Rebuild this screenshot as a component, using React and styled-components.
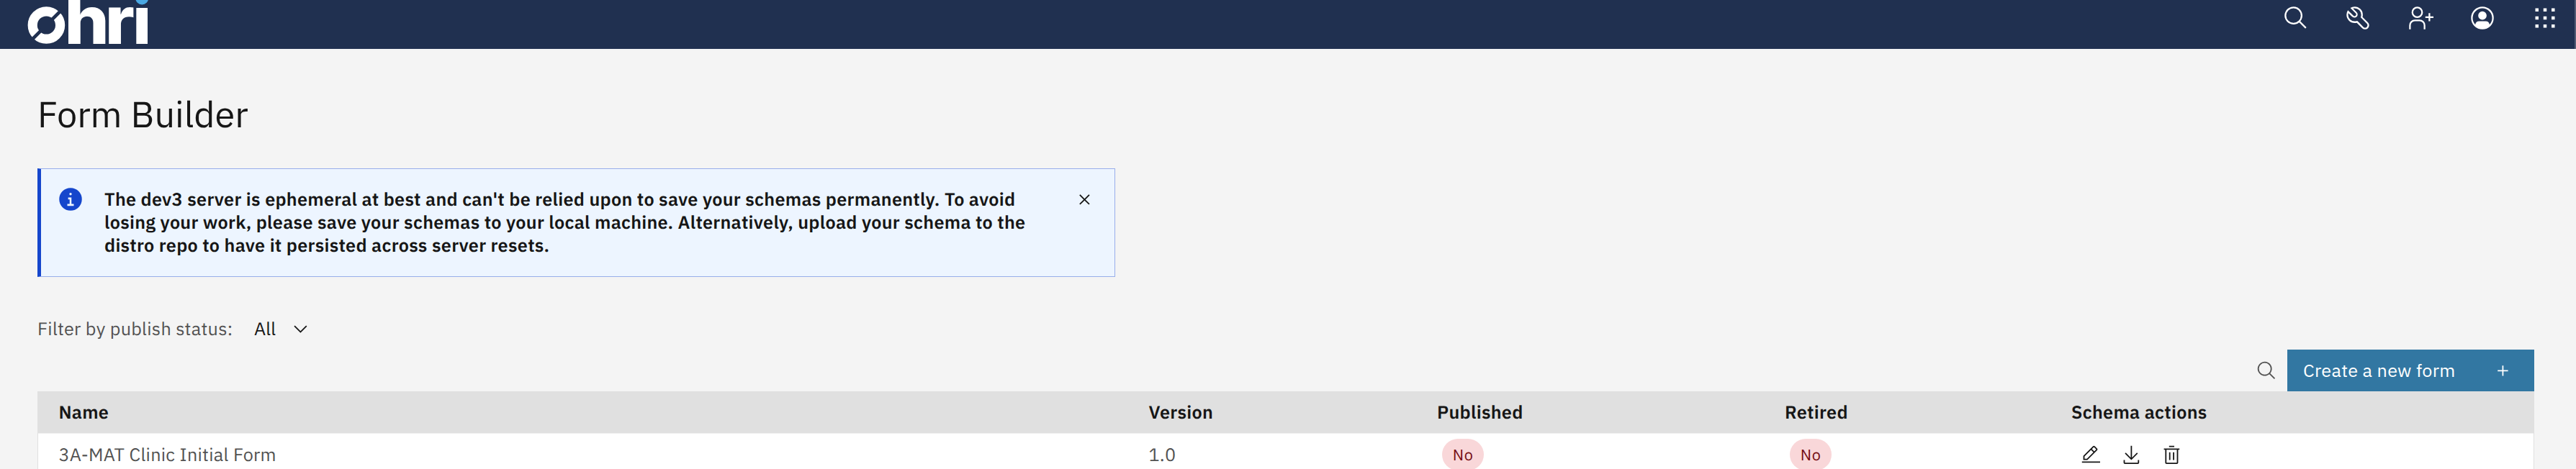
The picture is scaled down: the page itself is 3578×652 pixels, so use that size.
import React from "react";
import styled, { createGlobalStyle } from "styled-components";

const GlobalStyle = createGlobalStyle`
  *, *::before, *::after { box-sizing: border-box; }
  body {
    margin: 0;
    background: #f4f4f4;
    color: #161616;
    font-family: "IBM Plex Sans", Roboto, "Liberation Sans", sans-serif;
    font-size: 25.2px;
    line-height: 32.4px;
    letter-spacing: 0.288px;
    text-rendering: geometricPrecision;
  }
  svg { display: block; flex: none; }
`;

const Page = styled.div`
  height: 652px;
  overflow: hidden;
  display: flex;
  flex-direction: column;
`;

const Header = styled.header`
  height: 68px;
  flex: none;
  display: flex;
  justify-content: space-between;
  background: #203050;
  border-right: 2px solid #525c74;
`;

const HeaderActions = styled.nav`
  display: flex;
  height: 50px;
  margin-right: -2px;
`;

const HeaderButton = styled.button`
  width: 86.5px;
  padding: 0;
  border: 0;
  background: none;
  color: #fff;
  display: flex;
  align-items: center;
  justify-content: center;
`;

const Main = styled.main`
  padding: 0 58px 0 52px;
  display: flex;
  flex-direction: column;
`;

const Title = styled.h1`
  margin: 58px 0 0;
  font-size: 50.4px;
  line-height: 64px;
  font-weight: 400;
  letter-spacing: 0;
`;

const Notification = styled.section`
  width: 1497px;
  height: 151px;
  margin-top: 44px;
  padding: 25.5px 27px 0 23px;
  display: flex;
  align-items: flex-start;
  background: #edf5ff;
  border: 1px solid #98aeea;
  border-left: 5px solid #1546cc;
`;

const NotificationText = styled.p`
  width: 1300px;
  margin: 0 auto 0 29px;
  font-weight: 600;
`;

const NotificationIcon = styled.span`
  margin-top: -1.5px;
  color: #1546cc;
`;

const CloseButton = styled.button`
  margin-top: 2.5px;
  padding: 0;
  border: 0;
  background: none;
  color: #161616;
`;

const FilterRow = styled.div`
  height: 58px;
  margin-top: 43.5px;
  display: flex;
  align-items: center;
`;

const FilterLabel = styled.span`
  color: #525252;
  margin-right: 29.5px;
`;

const FilterValue = styled.span`
  margin-right: 19.5px;
`;

const Toolbar = styled.div`
  height: 58px;
  margin-top: -0.5px;
  display: flex;
  justify-content: flex-end;
`;

const SearchButton = styled.button`
  width: 57px;
  padding: 0;
  border: 0;
  background: none;
  color: #525252;
  display: flex;
  align-items: center;
  justify-content: center;
`;

const CreateButton = styled.button`
  width: 343px;
  padding: 0 29px 0 22px;
  border: 0;
  background: #3277a2;
  color: #fff;
  font: inherit;
  letter-spacing: 0.288px;
  display: flex;
  align-items: center;
  justify-content: space-between;
`;

const Table = styled.div`
  display: flex;
  flex-direction: column;
`;

const Row = styled.div`
  height: ${(p) => (p.$head ? "58px" : "60px")};
  display: grid;
  grid-template-columns: 1514px 400.7px 483px 398px 1fr;
  background: ${(p) => (p.$head ? "#e0e0e0" : "#fff")};
  color: ${(p) => (p.$head ? "#161616" : "#525252")};
  font-weight: ${(p) => (p.$head ? 600 : 400)};
  box-shadow: ${(p) =>
    p.$head ? "none" : "inset 1px 0 #e0e0e0, inset -1px 0 #e0e0e0, inset 0 1px #f1f1f1"};
`;

const Cell = styled.div`
  padding-left: 29.4px;
  display: flex;
  align-items: center;
`;

const Tag = styled.span`
  height: 43.2px;
  min-width: 57.6px;
  margin-left: 7.2px;
  padding: 0 14.4px;
  border-radius: 27px;
  background: #f9d7d9;
  color: #750e13;
  font-size: 21.6px;
  letter-spacing: 0.576px;
  display: flex;
  align-items: center;
  justify-content: center;
`;

const Actions = styled.div`
  margin-left: 13.2px;
  display: flex;
  gap: 27.2px;
  color: #161616;
`;

const ICONS = {
  search:
    "M29,27.5859l-7.5521-7.5521a11.0177,11.0177,0,1,0-1.4141,1.4141L27.5859,29ZM4,13a9,9,0,1,1,9,9A9.01,9.01,0,0,1,4,13Z",
  tools:
    "M12.1,2a9.8,9.8,0,0,0-5.4,1.6l6.4,6.4a2.1,2.1,0,0,1,.2,3,2.1,2.1,0,0,1-3-.2L3.7,6.4A9.84,9.84,0,0,0,2,12.1,10.14,10.14,0,0,0,12.1,22.2a10.9,10.9,0,0,0,2.6-.3l6.7,6.7a5,5,0,0,0,7.1-7.1l-6.7-6.7a10.9,10.9,0,0,0,.3-2.6A10,10,0,0,0,12.1,2Zm8,10.1a7.61,7.61,0,0,1-.3,2.1l-.3,1.1.8.8,6.7,6.7a2.88,2.88,0,0,1,.9,2.1A2.72,2.72,0,0,1,27,27a2.9,2.9,0,0,1-4.2,0l-6.7-6.7-.8-.8-1.1.3a7.61,7.61,0,0,1-2.1.3,8.27,8.27,0,0,1-5.7-2.3A7.63,7.63,0,0,1,4,12.1a8.33,8.33,0,0,1,.3-2.2l4.4,4.4a4.14,4.14,0,0,0,5.9.2,4.14,4.14,0,0,0-.2-5.9L10,4.2a6.45,6.45,0,0,1,2-.3,8.27,8.27,0,0,1,5.7,2.3A8.49,8.49,0,0,1,20.1,12.1Z",
  userAdd:
    "M32 14H28V10H26V14H22V16H26V20H28V16H32ZM12 4A5 5 0 1 1 7 9a5 5 0 0 1 5-5m0-2a7 7 0 1 0 7 7A7 7 0 0 0 12 2ZM22 30H20V25a5 5 0 0 0-5-5H9a5 5 0 0 0-5 5v5H2V25a7 7 0 0 1 7-7h6a7 7 0 0 1 7 7Z",
  avatar:
    "M16 2a14 14 0 1 0 14 14A14 14 0 0 0 16 2Zm8.8 22.2A4.8 4.8 0 0 0 20 20h-8a4.8 4.8 0 0 0-4.8 4.2 12 12 0 1 1 17.6 0ZM16 7.8a5.2 5.2 0 1 0 5.2 5.2A5.2 5.2 0 0 0 16 7.8Z",
  switcher:
    "M4 4h4v4H4zM14 4h4v4h-4zM24 4h4v4h-4zM4 14h4v4H4zM14 14h4v4h-4zM24 14h4v4h-4zM4 24h4v4H4zM14 24h4v4h-4zM24 24h4v4h-4z",
  info:
    "M16,2A14,14,0,1,0,30,16,14,14,0,0,0,16,2Zm0,6a1.5,1.5,0,1,1-1.5,1.5A1.5,1.5,0,0,1,16,8Zm4,16.125H12v-2.25h2.875v-5.75H13v-2.25h4.125v8H20Z",
  close:
    "M17.4141 16 24 9.4141 22.5859 8 16 14.5859 9.4143 8 8 9.4141 14.5859 16 8 22.5859 9.4143 24 16 17.4141 22.5859 24 24 22.5859Z",
  chevron: "M16 22 6 12 7.4 10.6 16 19.2 24.6 10.6 26 12Z",
  add: "M17 15V8H15V15H8V17H15V24H17V17H24V15Z",
  edit:
    "M2 26h28v2H2ZM25.4 9c.8-.8.8-2 0-2.8l-3.6-3.6c-.8-.8-2-.8-2.8 0l-15 15V24h6.4l15-15Zm-5-5L24 7.6l-3 3L17.4 7l3-3ZM6 22v-3.6l10-10 3.6 3.6-10 10H6Z",
  download:
    "M26 24v4H6v-4H4v4a2 2 0 0 0 2 2h20a2 2 0 0 0 2-2v-4ZM26 14 24.59 12.59 17 20.17V2h-2v18.17L7.41 12.59 6 14 16 24Z",
  trash:
    "M12 12h2v12h-2ZM18 12h2v12h-2ZM4 6v2h2v20a2 2 0 0 0 2 2h16a2 2 0 0 0 2-2V8h2V6ZM8 28V8h16v20ZM12 2h8v2h-8Z",
};

const Icon = ({ name, size = 28.8 }) => (
  <svg width={size} height={size} viewBox="0 0 32 32" fill="currentColor" fillRule="evenodd" aria-hidden="true">
    <path d={ICONS[name]} />
  </svg>
);

const LogoText = styled.text`
  font-family: Inter, sans-serif;
  font-weight: 770;
  font-size: 92.5px;
  letter-spacing: 0;
  fill: #fff;
`;

const Logo = () => (
  <svg width="230" height="68" viewBox="0 0 230 68" role="img" aria-label="ohri">
    <circle cx="64.4" cy="35" r="19.2" fill="none" stroke="#fff" strokeWidth="13.2" />
    <path d="M70.5 28.9 86 13.4M58.3 41.1 42.8 56.6" stroke="#203050" strokeWidth="4.8" />
    <LogoText transform="translate(89.6 61) scale(1.06 1)">h</LogoText>
    <LogoText transform="translate(145.7 61) scale(1.06 1)">r</LogoText>
    <rect x="189.3" y="11" width="15.7" height="50" fill="#fff" />
    <circle cx="197.2" cy="-2.6" r="9" fill="#4aa8e2" />
  </svg>
);

const columns = ["Name", "Version", "Published", "Retired", "Schema actions"];
const forms = [{ name: "3A-MAT Clinic Initial Form", version: "1.0", published: "No", retired: "No" }];
const headerIcons = ["search", "tools", "userAdd", "avatar", "switcher"];

export default function App() {
  return (
    <Page>
      <GlobalStyle />
      <Header>
        <Logo />
        <HeaderActions>
          {headerIcons.map((name) => (
            <HeaderButton key={name} aria-label={name}>
              <Icon name={name} size={36} />
            </HeaderButton>
          ))}
        </HeaderActions>
      </Header>
      <Main>
        <Title>Form Builder</Title>
        <Notification>
          <NotificationIcon>
            <Icon name="info" size={36} />
          </NotificationIcon>
          <NotificationText>
            The dev3 server is ephemeral at best and can't be relied upon to save your schemas permanently. To avoid
            losing your work, please save your schemas to your local machine. Alternatively, upload your schema to the
            distro repo to have it persisted across server resets.
          </NotificationText>
          <CloseButton aria-label="Close">
            <Icon name="close" />
          </CloseButton>
        </Notification>
        <FilterRow>
          <FilterLabel>Filter by publish status:</FilterLabel>
          <FilterValue>All</FilterValue>
          <Icon name="chevron" />
        </FilterRow>
        <Toolbar>
          <SearchButton aria-label="Search">
            <Icon name="search" />
          </SearchButton>
          <CreateButton>
            Create a new form
            <Icon name="add" />
          </CreateButton>
        </Toolbar>
        <Table>
          <Row $head>
            {columns.map((c) => (
              <Cell key={c}>{c}</Cell>
            ))}
          </Row>
          {forms.map((f) => (
            <Row key={f.name}>
              <Cell>{f.name}</Cell>
              <Cell>{f.version}</Cell>
              <Cell>
                <Tag>{f.published}</Tag>
              </Cell>
              <Cell>
                <Tag>{f.retired}</Tag>
              </Cell>
              <Cell>
                <Actions>
                  <Icon name="edit" />
                  <Icon name="download" />
                  <Icon name="trash" />
                </Actions>
              </Cell>
            </Row>
          ))}
        </Table>
      </Main>
    </Page>
  );
}
